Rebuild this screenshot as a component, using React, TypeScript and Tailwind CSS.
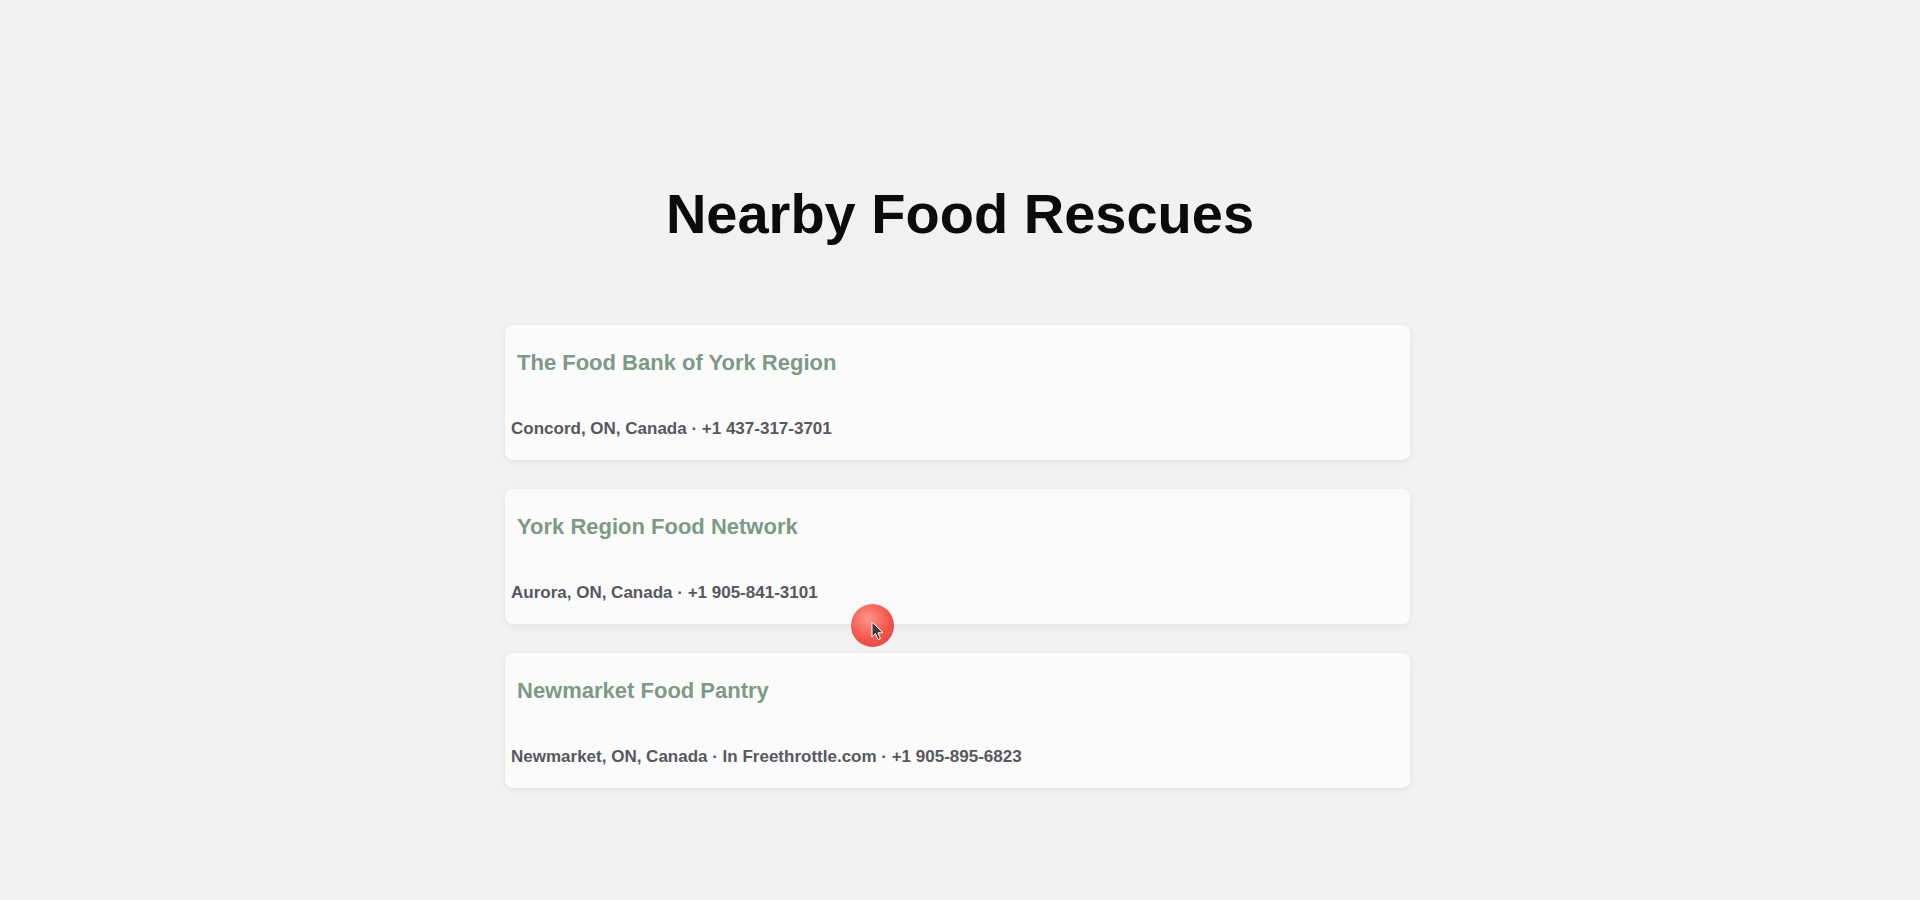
const RESCUES = [
  {
    name: "The Food Bank of York Region",
    detail: "Concord, ON, Canada · +1 437-317-3701",
  },
  {
    name: "York Region Food Network",
    detail: "Aurora, ON, Canada · +1 905-841-3101",
  },
  {
    name: "Newmarket Food Pantry",
    detail: "Newmarket, ON, Canada · In Freethrottle.com · +1 905-895-6823",
  },
];

export default function App() {
  return (
    <div className="relative min-h-[900px] w-full bg-[#f1f1f2] font-['Liberation_Sans',Arial,sans-serif]">
      <div className="flex flex-col items-center pt-[182px]">
        <h1 className="text-[56px] leading-[64px] font-bold text-[#0b0b0b]">
          Nearby Food Rescues
        </h1>

        <div className="mt-[79px] mr-[5px] flex w-[905px] flex-col gap-[29px]">
          {RESCUES.map((r) => (
            <div
              key={r.name}
              className="flex flex-col rounded-lg bg-[#fbfbfc] pt-[24px] pb-[19px] shadow-[0_2px_6px_rgba(0,0,0,0.06)]"
            >
              <h2 className="ml-[12px] text-[22px] leading-[28px] font-bold text-[#7d9a86]">
                {r.name}
              </h2>
              <p className="ml-[6px] mt-[40px] text-[17px] leading-[24px] font-bold text-[#58585c]">
                {r.detail}
              </p>
            </div>
          ))}
        </div>
      </div>

      {/* recorded cursor highlight */}
      <div className="pointer-events-none absolute left-[851px] top-[604px] h-[43px] w-[43px] rounded-full bg-[radial-gradient(circle_at_40%_35%,#ff8a80_0%,#f44336_55%,#d32f2f_100%)] opacity-90" />
      <svg
        className="pointer-events-none absolute left-[871px] top-[621px]"
        width="14"
        height="20"
        viewBox="0 0 14 20"
      >
        <path
          d="M1 1 L1 16 L4.5 12.5 L7 18.5 L9.5 17.5 L7 11.8 L12 11.8 Z"
          fill="#3a3a3a"
          stroke="#ffffff"
          strokeWidth="1"
          strokeLinejoin="round"
        />
      </svg>
    </div>
  );
}
